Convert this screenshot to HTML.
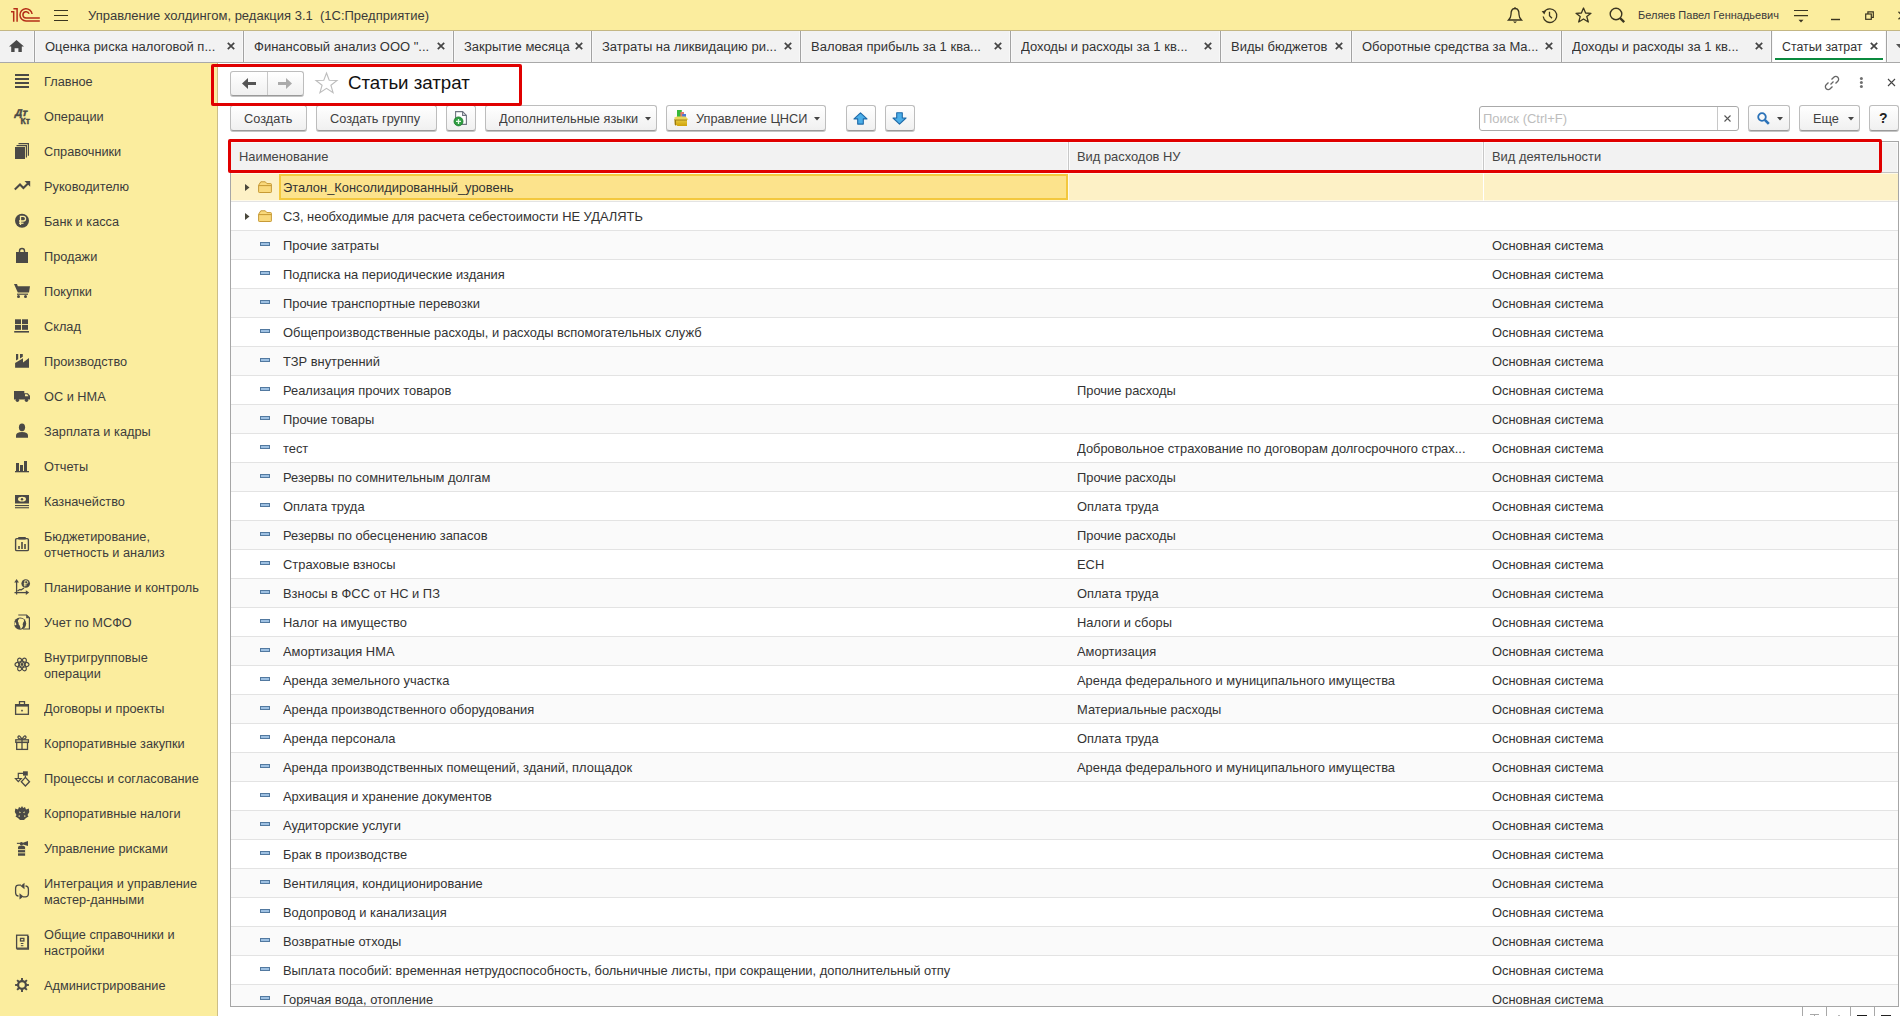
<!DOCTYPE html>
<html><head><meta charset="utf-8"><title>Статьи затрат</title><style>
*{margin:0;padding:0;box-sizing:border-box}
html,body{width:1900px;height:1016px;overflow:hidden;background:#fff}
body{position:relative;font-family:"Liberation Sans",sans-serif;color:#333333;font-size:13px}
.a{position:absolute}
.t{position:absolute;white-space:pre;line-height:1;transform:scaleY(var(--sy,1.04));transform-origin:0 0.8465em}
svg{position:absolute;overflow:visible}
.btn{position:absolute;border:1px solid #BDBDBD;border-bottom-color:#9A9A9A;border-radius:3px;background:linear-gradient(#FFFFFF,#F0F0F0);box-shadow:0 1px 0 #C4C4C4}
.tab{position:absolute;top:31px;height:31px}
.sep{position:absolute;top:31px;width:1px;height:31px;background:#A3A3A3;box-shadow:-1px 0 #F8F8F8,1px 0 #F8F8F8}
.row{position:absolute;left:231px;width:1667px;height:29px;border-bottom:1px solid #E4E4E4}
.ct{position:absolute;white-space:pre;line-height:1;font-size:12.9px;color:#333;transform:scaleY(1.04);transform-origin:0 10.9px}
.sb{position:absolute;left:44px;white-space:pre;line-height:15.38px;font-size:12.75px;color:#3C3C3C;transform:scaleY(1.04);transform-origin:0 12.11px}
</style></head><body>
<div class="a" style="left:0;top:0;width:1900px;height:31px;background:#FBED9E;border-bottom:1px solid #C4B784"></div>
<svg style="left:0;top:0" width="46" height="30" viewBox="0 0 46 30">
<g fill="none" stroke="#B52E18" stroke-width="1.5">
<path d="M11 11.8 H13.7 V21.7"/><path d="M13.4 8.8 H17.1 V21.7"/>
<path d="M32.1 14 A6.1 6.1 0 1 0 26 20.9 H39.8"/>
<path d="M29.1 13.7 A3.2 3.2 0 1 0 26 18.1 H39.8"/>
</g></svg>
<svg style="left:54px;top:9px" width="14" height="13" viewBox="0 0 14 13">
<g stroke="#3A3520" stroke-width="1.2"><path d="M0 1.5H14M0 6.5H14M0 11.5H14"/></g></svg>
<div class="t" style="left:88px;top:9px;font-size:13px;color:#3A3A3A">Управление холдингом, редакция 3.1  (1С:Предприятие)</div>
<svg style="left:1507px;top:7px" width="16" height="17" viewBox="0 0 16 17"><g fill="none" stroke="#3A3520" stroke-width="1.3">
<path d="M8 1.5 C4.5 1.5 4 4.5 4 7.5 C4 10 3 11.5 1.5 13 H14.5 C13 11.5 12 10 12 7.5 C12 4.5 11.5 1.5 8 1.5Z"/></g>
<path d="M6 14.5 H10 L8 16.2Z" fill="#3A3520"/><circle cx="8" cy="1.2" r="1" fill="#3A3520"/></svg>
<svg style="left:1541px;top:7px" width="17" height="17" viewBox="0 0 17 17"><g fill="none" stroke="#3A3520" stroke-width="1.3">
<path d="M3.2 5 A6.8 6.8 0 1 1 2.2 9.5"/><path d="M8.5 4.8 L8.5 8.8 L11 11.2"/></g>
<path d="M0.6 4.2 L5 3.4 L3.4 7.6Z" fill="#3A3520"/></svg>
<svg style="left:1575px;top:7px" width="17" height="17" viewBox="0 0 17 17"><path d="M8.5 1 L10.6 6 L16 6.3 L11.8 9.6 L13.3 15 L8.5 12 L3.7 15 L5.2 9.6 L1 6.3 L6.4 6Z" fill="none" stroke="#3A3520" stroke-width="1.3" stroke-linejoin="round"/></svg>
<svg style="left:1609px;top:7px" width="17" height="17" viewBox="0 0 17 17"><circle cx="7" cy="7" r="5.8" fill="none" stroke="#3A3520" stroke-width="1.4"/><path d="M11 11 L15.2 15.2" stroke="#3A3520" stroke-width="2.4"/></svg>
<div class="t" style="left:1638px;top:10px;font-size:11px;color:#3A3A3A;--sy:1.05">Беляев Павел Геннадьевич</div>
<svg style="left:1794px;top:9px" width="14" height="14" viewBox="0 0 14 14"><g stroke="#3A3520" stroke-width="1.1"><path d="M0 1.5H14M0 6.6H14"/></g><path d="M4.5 10.8H9.5L7 13.4Z" fill="#3A3520"/></svg>
<svg style="left:1831px;top:18px" width="9" height="3" viewBox="0 0 9 3"><path d="M0 1.5H9" stroke="#3A3520" stroke-width="1.4"/></svg>
<svg style="left:1864px;top:10px" width="11" height="11" viewBox="0 0 11 11"><g fill="none" stroke="#3A3520" stroke-width="1.2"><rect x="1.7" y="4" width="5.6" height="5.3"/><path d="M3.9 3.9V1.8H9.3V7.3H7.4"/></g></svg>
<svg style="left:1898px;top:11px" width="9" height="9" viewBox="0 0 9 9"><path d="M0.5 0.8L8 8.3M8 0.8L0.5 8.3" stroke="#3A3520" stroke-width="1.3"/></svg>
<div class="a" style="left:0;top:31px;width:1900px;height:32px;background:#F2F2F2;border-bottom:1px solid #A9A9A9"></div>
<svg style="left:9px;top:40px" width="15" height="12" viewBox="0 0 15 12"><path d="M7.5 0 L15 6.6 H12.8 V12 H9.4 V8.2 H5.6 V12 H2.2 V6.6 H0Z" fill="#4A4A4A"/></svg>
<div class="sep" style="left:34px"></div>
<div class="t" style="left:45px;top:40px;font-size:13px;color:#333">Оценка риска налоговой п...</div>
<svg style="left:227px;top:42px" width="8" height="8" viewBox="0 0 8 8"><path d="M0.8 0.8L7.2 7.2M7.2 0.8L0.8 7.2" stroke="#444" stroke-width="1.7"/></svg>
<div class="sep" style="left:243px"></div>
<div class="t" style="left:254px;top:40px;font-size:13px;color:#333">Финансовый анализ ООО &quot;...</div>
<svg style="left:437px;top:42px" width="8" height="8" viewBox="0 0 8 8"><path d="M0.8 0.8L7.2 7.2M7.2 0.8L0.8 7.2" stroke="#444" stroke-width="1.7"/></svg>
<div class="sep" style="left:453px"></div>
<div class="t" style="left:464px;top:40px;font-size:13px;color:#333">Закрытие месяца</div>
<svg style="left:575px;top:42px" width="8" height="8" viewBox="0 0 8 8"><path d="M0.8 0.8L7.2 7.2M7.2 0.8L0.8 7.2" stroke="#444" stroke-width="1.7"/></svg>
<div class="sep" style="left:591px"></div>
<div class="t" style="left:602px;top:40px;font-size:13px;color:#333">Затраты на ликвидацию ри...</div>
<svg style="left:784px;top:42px" width="8" height="8" viewBox="0 0 8 8"><path d="M0.8 0.8L7.2 7.2M7.2 0.8L0.8 7.2" stroke="#444" stroke-width="1.7"/></svg>
<div class="sep" style="left:800px"></div>
<div class="t" style="left:811px;top:40px;font-size:13px;color:#333">Валовая прибыль за 1 ква...</div>
<svg style="left:994px;top:42px" width="8" height="8" viewBox="0 0 8 8"><path d="M0.8 0.8L7.2 7.2M7.2 0.8L0.8 7.2" stroke="#444" stroke-width="1.7"/></svg>
<div class="sep" style="left:1010px"></div>
<div class="t" style="left:1021px;top:40px;font-size:13px;color:#333">Доходы и расходы за 1 кв...</div>
<svg style="left:1204px;top:42px" width="8" height="8" viewBox="0 0 8 8"><path d="M0.8 0.8L7.2 7.2M7.2 0.8L0.8 7.2" stroke="#444" stroke-width="1.7"/></svg>
<div class="sep" style="left:1220px"></div>
<div class="t" style="left:1231px;top:40px;font-size:13px;color:#333">Виды бюджетов</div>
<svg style="left:1335px;top:42px" width="8" height="8" viewBox="0 0 8 8"><path d="M0.8 0.8L7.2 7.2M7.2 0.8L0.8 7.2" stroke="#444" stroke-width="1.7"/></svg>
<div class="sep" style="left:1351px"></div>
<div class="t" style="left:1362px;top:40px;font-size:13px;color:#333">Оборотные средства за Ма...</div>
<svg style="left:1545px;top:42px" width="8" height="8" viewBox="0 0 8 8"><path d="M0.8 0.8L7.2 7.2M7.2 0.8L0.8 7.2" stroke="#444" stroke-width="1.7"/></svg>
<div class="sep" style="left:1561px"></div>
<div class="t" style="left:1572px;top:40px;font-size:13px;color:#333">Доходы и расходы за 1 кв...</div>
<svg style="left:1755px;top:42px" width="8" height="8" viewBox="0 0 8 8"><path d="M0.8 0.8L7.2 7.2M7.2 0.8L0.8 7.2" stroke="#444" stroke-width="1.7"/></svg>
<div class="a" style="left:1772px;top:31px;width:114px;height:31px;background:#fff"></div>
<div class="a" style="left:1775px;top:58px;width:108px;height:2px;background:#0A8A3E"></div>
<div class="sep" style="left:1771px"></div>
<div class="t" style="left:1782px;top:40.5px;font-size:12.35px;color:#333">Статьи затрат</div>
<svg style="left:1870px;top:42px" width="8" height="8" viewBox="0 0 8 8"><path d="M0.8 0.8L7.2 7.2M7.2 0.8L0.8 7.2" stroke="#444" stroke-width="1.7"/></svg>
<div class="sep" style="left:1886px"></div>
<svg style="left:1896px;top:44px" width="7" height="5" viewBox="0 0 7 5"><path d="M0 0H7L3.5 4Z" fill="#555"/></svg>
<div class="a" style="left:0;top:63px;width:218px;height:953px;background:#FBED9E;border-right:1px solid #CDBE86"></div>
<div class="sb" style="top:74.26px">Главное</div>
<div class="sb" style="top:109.26px">Операции</div>
<div class="sb" style="top:144.26px">Справочники</div>
<div class="sb" style="top:179.26px">Руководителю</div>
<div class="sb" style="top:214.26px">Банк и касса</div>
<div class="sb" style="top:249.26px">Продажи</div>
<div class="sb" style="top:284.26px">Покупки</div>
<div class="sb" style="top:319.26px">Склад</div>
<div class="sb" style="top:354.26px">Производство</div>
<div class="sb" style="top:389.26px">ОС и НМА</div>
<div class="sb" style="top:424.26px">Зарплата и кадры</div>
<div class="sb" style="top:459.26px">Отчеты</div>
<div class="sb" style="top:494.26px">Казначейство</div>
<div class="sb" style="top:529.26px">Бюджетирование,<br>отчетность и анализ</div>
<div class="sb" style="top:580.26px">Планирование и контроль</div>
<div class="sb" style="top:615.26px">Учет по МСФО</div>
<div class="sb" style="top:650.26px">Внутригрупповые<br>операции</div>
<div class="sb" style="top:701.26px">Договоры и проекты</div>
<div class="sb" style="top:736.26px">Корпоративные закупки</div>
<div class="sb" style="top:771.26px">Процессы и согласование</div>
<div class="sb" style="top:806.26px">Корпоративные налоги</div>
<div class="sb" style="top:841.26px">Управление рисками</div>
<div class="sb" style="top:876.26px">Интеграция и управление<br>мастер-данными</div>
<div class="sb" style="top:927.26px">Общие справочники и<br>настройки</div>
<div class="sb" style="top:978.26px">Администрирование</div>
<svg style="left:0;top:0" width="218" height="1016" viewBox="0 0 218 1016">
<g fill="#4A4946">
<rect x="15" y="74" width="14" height="2"/><rect x="15" y="78" width="14" height="2"/><rect x="15" y="82" width="14" height="2"/><rect x="15" y="86" width="14" height="2"/>
<text x="14.6" y="116.4" font-family="Liberation Sans" font-size="10" font-weight="bold" stroke="#4A4946" stroke-width="0.5" transform="translate(14.6 116.4) skewX(-14) translate(-14.6 -116.4)">Дт</text>
<text x="20.6" y="123.6" font-family="Liberation Sans" font-size="8.6" font-weight="bold" stroke="#4A4946" stroke-width="0.4">Кт</text>
<rect x="15" y="147" width="10" height="12"/>
</g>
<g fill="none" stroke="#4A4946" stroke-width="1.2">
<path d="M16.5 145.6 H26.4 V157.5"/><path d="M18.5 143.6 H28.4 V155.7"/>
<path d="M14.8 189.5 L20 184.5 L23.4 188 L28 183.5" stroke-width="2"/>
</g>
<g fill="#4A4946">
<path d="M24.5 181 H30.2 V186.8Z"/>
<circle cx="22" cy="220.7" r="7"/>
</g>
<g fill="none" stroke="#FBED9E" stroke-width="1.3">
<path d="M20.5 225 V216.3 H23.2 A2.3 2.3 0 0 1 23.2 221 H19"/><path d="M19 223.2 H23.5"/>
</g>
<g fill="#4A4946">
<path d="M16 252 H28 V263 H16Z"/>
</g>
<path d="M19.5 253.5 V251 A2.5 2.5 0 0 1 24.5 251 V253.5" fill="none" stroke="#4A4946" stroke-width="1.4"/>
<g fill="#4A4946">
<path d="M14 284 H17 L17.8 286.2 H30 L29 292.6 H17.8 Z"/>
<rect x="17" y="293.6" width="11" height="1.2"/>
<circle cx="18.5" cy="296.6" r="1.5"/><circle cx="25.5" cy="296.6" r="1.5"/>
<rect x="15" y="319.3" width="6" height="4.8"/><rect x="22" y="319.3" width="6" height="4.8"/>
<rect x="15" y="325" width="6" height="4.8"/><rect x="22" y="325" width="6" height="4.8"/>
<rect x="14.2" y="331" width="14.8" height="1.6"/>
<path d="M16 354 H18.2 V359.2 L16 360.4Z"/><path d="M20 354 H22.8 L22.8 356.8 L20 358.4Z"/>
<path d="M15.1 363 L23 358.2 V362.6 L29 358 V367.8 H15.1Z"/>
<path d="M14 391 H24.3 V393.2 H27.8 L30 395.8 V399.6 H14Z"/>
<circle cx="17.4" cy="400.3" r="1.7"/><circle cx="26.5" cy="400.3" r="1.7"/>
</g>
<path d="M25 394.3 H27.2 L28.5 396.2 H25Z" fill="#FBED9E"/>
<g fill="#4A4946">
<ellipse cx="22" cy="427.3" rx="3.1" ry="3.9"/>
<path d="M16 437.8 V435.5 Q16 432 22 432 Q28 432 28 435.5 V437.8Z"/>
<rect x="16" y="463" width="3" height="8.4"/><rect x="20" y="465" width="3" height="6.4"/><rect x="24" y="461" width="3" height="10.4"/>
<rect x="15" y="471" width="14" height="1.3"/>
<path d="M15 495 H29 V503.5 H15Z M18 499.2 A4 2.4 0 0 0 26 499.2 A4 2.4 0 0 0 18 499.2Z" fill-rule="evenodd"/>
<rect x="15" y="505" width="14" height="1.1"/><rect x="15" y="507.2" width="14" height="1.1"/>
</g>
<circle cx="22" cy="499.2" r="1.2" fill="#4A4946"/>
<g fill="none" stroke="#4A4946" stroke-width="1.4">
<rect x="15.6" y="538.6" width="12.8" height="12" rx="1.2"/>
</g>
<g fill="#4A4946">
<rect x="18" y="537" width="8" height="2.4" rx="1"/>
<rect x="18.2" y="546" width="1.6" height="3"/><rect x="21.2" y="542" width="1.6" height="7"/><rect x="24.2" y="544" width="1.6" height="5"/>
</g>
<g fill="none" stroke="#4A4946" stroke-width="1.3">
<path d="M16.6 581 V594.5"/><path d="M14.5 592.6 H27"/><path d="M17.5 591 L20 589.5 L21 590 L24 588"/>
</g>
<g fill="#4A4946">
<path d="M16.6 579 L19 582.5 H14.2Z"/><path d="M29.2 592.6 L25.8 590.3 V594.9Z"/>
<circle cx="25.7" cy="583.5" r="4.3"/>
</g>
<path d="M24.8 586.5 V580.8 H26.4 A1.4 1.4 0 0 1 26.4 583.6 H23.8 M23.8 585 H26.6" fill="none" stroke="#FBED9E" stroke-width="0.9"/>
<path d="M18.3 615 H26.6 L29.4 617.8 V629 H23" fill="none" stroke="#4A4946" stroke-width="1.2"/><path d="M26.2 615 V618.2 H29.4Z" fill="#4A4946"/>
<circle cx="20.1" cy="623.6" r="6.1" fill="#4A4946"/>
<path d="M19.2 618.6 Q21.8 618 23.8 619.6 Q24.6 621.4 23.2 622.6 Q22.2 624.2 23 626 Q22 628.6 20.6 629 Q20.4 626.8 19.6 625.6 Q18.2 624.6 18.6 622.8 Q17.6 621.8 18 620.4Z" fill="#FBED9E"/>
<path d="M14.6 621.6 Q16.2 622.8 16.4 624.8 Q15.6 625.6 14.4 625Z" fill="#FBED9E"/>
<g fill="none" stroke="#4A4946" stroke-width="1.2">
<ellipse cx="22" cy="664.5" rx="7" ry="2.6"/>
<ellipse cx="22" cy="664.5" rx="7" ry="2.6" transform="rotate(60 22 664.5)"/>
<ellipse cx="22" cy="664.5" rx="7" ry="2.6" transform="rotate(-60 22 664.5)"/>
</g>
<circle cx="22" cy="664.5" r="1.4" fill="#4A4946"/>
<g fill="none" stroke="#4A4946" stroke-width="1.3">
<rect x="15.6" y="704.7" width="12.8" height="9.6"/>
<path d="M19.5 704.5 V701.7 H24.5 V704.5"/>
</g>
<rect x="15" y="704" width="14" height="2.6" fill="#4A4946"/>
<rect x="21.2" y="709.8" width="1.6" height="1.6" fill="#4A4946"/>
<g fill="none" stroke="#4A4946" stroke-width="1.3">
<rect x="15.8" y="739.8" width="12.6" height="2.6"/>
<rect x="16.7" y="742.4" width="10.8" height="7"/>
<path d="M22 739.5 V749.5"/>
<path d="M22 739.2 Q19 733.8 18 737 Q17.5 739 22 739.2 Q26.5 739 26 737 Q25 733.8 22 739.2"/>
</g>
<rect x="23" y="771.3" width="4.8" height="4.3" fill="#4A4946"/>
<g fill="none" stroke="#4A4946" stroke-width="1.2">
<path d="M23 773.4 H18.3 V778"/><path d="M25.4 775.5 V777.5"/>
<path d="M25.4 777.4 L29.5 781.7 L25.4 786 L21.3 781.7Z" stroke-width="1.3"/>
<path d="M15.5 778.5 H21.2 L18.3 781.6Z"/>
</g>
<g fill="#4A4946">
<path d="M22 806 L23.2 808 L25 807 L26 809.5 L28.8 808.5 L29.3 812 L27.5 815 L28.5 816.5 L26 818 L24 820 H20 L18 818 L15.5 816.5 L16.5 815 L14.8 812 L15.3 808.5 L18 809.5 L19 807 L20.8 808Z"/>
</g>
<g fill="#FBED9E"><path d="M19.2 811.5 L21 812.2 L19.6 813.2Z"/><path d="M24.8 811.5 L23 812.2 L24.4 813.2Z"/><path d="M18 816 L20 815.2 L19.6 817Z"/><path d="M26 816 L24 815.2 L24.4 817Z"/></g>
<g fill="#4A4946">
<path d="M18 847.5 Q18 845.5 21.5 845.5 Q25.1 845.5 25.1 847.5 V855.8 H18Z"/>
<circle cx="21.5" cy="843.8" r="1.7"/>
<path d="M23 842.8 L28 841 V846 L23 844.5Z"/>
<rect x="16.9" y="842.8" width="4.5" height="1.1"/>
</g>
<g fill="#FBED9E"><rect x="18" y="849.2" width="7.1" height="0.9"/><rect x="18" y="852.4" width="7.1" height="0.9"/></g>
<g fill="none" stroke="#4A4946" stroke-width="1.3">
<path d="M21 885.2 H18.5 Q15.8 885.2 15.6 888 V893 Q15.8 896 18.5 896"/>
<path d="M23 896.8 H25.5 Q28.2 896.8 28.4 894 V889 Q28.2 886 25.5 886"/>
</g>
<g fill="#4A4946"><path d="M24.5 882.8 V889.2 L20.5 886Z"/><path d="M19.5 893.2 V899.6 L23.5 896.4Z"/></g>
<g fill="none" stroke="#4A4946" stroke-width="1.3">
<rect x="16.6" y="935.2" width="11.2" height="13"/>
<path d="M16.6 949.2 H28.4 V936"/>
<rect x="20.5" y="938.4" width="3.4" height="2.6"/>
</g>
<rect x="20.8" y="943" width="2.6" height="1" fill="#4A4946"/><rect x="20.8" y="945.2" width="2.6" height="1" fill="#4A4946"/>
<g transform="translate(22 985)"><circle r="3.9" fill="none" stroke="#4A4946" stroke-width="2.2"/><g stroke="#4A4946" stroke-width="1.9"><path d="M4.20 0.00 L6.90 0.00"/><path d="M2.97 2.97 L4.88 4.88"/><path d="M0.00 4.20 L0.00 6.90"/><path d="M-2.97 2.97 L-4.88 4.88"/><path d="M-4.20 0.00 L-6.90 0.00"/><path d="M-2.97 -2.97 L-4.88 -4.88"/><path d="M-0.00 -4.20 L-0.00 -6.90"/><path d="M2.97 -2.97 L4.88 -4.88"/></g></g>
</svg>
<div class="btn" style="left:230px;top:71px;width:74px;height:25px"></div>
<div class="a" style="left:267px;top:72px;width:1px;height:23px;background:#C8C8C8"></div>
<svg style="left:242px;top:78px" width="14" height="11" viewBox="0 0 14 11"><path d="M0 5.5 L6 0 V4 H14 V7 H6 V11Z" fill="#555"/></svg>
<svg style="left:278px;top:78px" width="14" height="11" viewBox="0 0 14 11"><path d="M14 5.5 L8 0 V4 H0 V7 H8 V11Z" fill="#ABABAB"/></svg>
<svg style="left:315px;top:72px" width="23" height="22" viewBox="0 0 23 22"><path d="M11.5 1 L14.2 8.2 L22 8.4 L15.9 13.2 L18.1 20.8 L11.5 16.4 L4.9 20.8 L7.1 13.2 L1 8.4 L8.8 8.2Z" fill="none" stroke="#BDBDBD" stroke-width="1.1" stroke-linejoin="miter"/></svg>
<div class="t" style="left:348px;top:74px;font-size:18.7px;color:#111;--sy:1">Статьи затрат</div>
<svg style="left:1824px;top:75px" width="16" height="16" viewBox="0 0 16 16"><g fill="none" stroke="#666" stroke-width="1.3"><path d="M6.5 9.5 L9.5 6.5"/><path d="M7.5 4.5 L9.8 2.2 A2.6 2.6 0 0 1 13.8 6.2 L11.5 8.5"/><path d="M8.5 11.5 L6.2 13.8 A2.6 2.6 0 0 1 2.2 9.8 L4.5 7.5"/></g></svg>
<svg style="left:1859px;top:77px" width="5" height="12" viewBox="0 0 5 12"><g fill="#707070"><circle cx="2.4" cy="1.6" r="1.5"/><circle cx="2.4" cy="5.5" r="1.5"/><circle cx="2.4" cy="9.5" r="1.5"/></g></svg>
<svg style="left:1888px;top:79px" width="7" height="7" viewBox="0 0 7 7"><path d="M0 0L7 7M7 0L0 7" stroke="#444" stroke-width="1.1"/></svg>
<div class="btn" style="left:230px;top:105px;width:77px;height:26px"></div>
<div class="t" style="left:244px;top:112.5px;font-size:12.75px;color:#404040">Создать</div>
<div class="btn" style="left:316px;top:105px;width:121px;height:26px"></div>
<div class="t" style="left:330px;top:112.5px;font-size:12.75px;color:#404040">Создать группу</div>
<div class="btn" style="left:446px;top:105px;width:30px;height:26px"></div>
<svg style="left:452px;top:110px" width="18" height="18" viewBox="0 0 18 18"><path d="M3.6 1.6 H10.6 L14.4 5.4 V14.4 H3.6Z" fill="#fff" stroke="#6E7480" stroke-width="1.1"/><path d="M10.6 1.6 V5.4 H14.4" fill="none" stroke="#6E7480" stroke-width="1.1"/>
<circle cx="6.5" cy="11.4" r="4.5" fill="#2E9E40" stroke="#1B7A2C" stroke-width="0.8"/><path d="M6.5 8.9V13.9M4 11.4H9" stroke="#E8F8E8" stroke-width="1.3"/></svg>
<div class="btn" style="left:485px;top:105px;width:172px;height:26px"></div>
<div class="t" style="left:499px;top:112.5px;font-size:12.75px;color:#404040">Дополнительные языки</div>
<svg style="left:645px;top:117px" width="6" height="4" viewBox="0 0 6 4"><path d="M0 0H6L3 3.5Z" fill="#444"/></svg>
<div class="btn" style="left:666px;top:105px;width:160px;height:26px"></div>
<div class="t" style="left:696px;top:112.5px;font-size:12.75px;color:#404040">Управление ЦНСИ</div>
<svg style="left:814px;top:117px" width="6" height="4" viewBox="0 0 6 4"><path d="M0 0H6L3 3.5Z" fill="#444"/></svg>
<svg style="left:673px;top:109px" width="17" height="18" viewBox="0 0 17 18">
<defs><linearGradient id="bx" x1="0" y1="0" x2="0" y2="1"><stop offset="0" stop-color="#EBD24A"/><stop offset="1" stop-color="#CFA20A"/></linearGradient></defs>
<rect x="4" y="1" width="4.8" height="7" fill="#36B83A"/><rect x="7.4" y="3" width="3.6" height="5.5" fill="#E07A6A"/><rect x="9.2" y="5" width="3.8" height="3.5" fill="#4A78D8"/>
<path d="M1.2 8.4 L4 7.4 H12.6 L15.4 10.4 L13.8 11 H3Z" fill="#E9D75A"/>
<path d="M3 11 H14 V17 H4.5 L1.8 15 L1.5 9.5Z" fill="url(#bx)"/>
<path d="M1.5 9.5 L3 11 V17 L1.8 15.5Z" fill="#9A7A10"/>
<path d="M3 11 H14" stroke="#8A6A08" stroke-width="0.8"/>
</svg>
<div class="btn" style="left:846px;top:105px;width:30px;height:26px"></div>
<div class="btn" style="left:885px;top:105px;width:30px;height:26px"></div>
<svg style="left:853px;top:111.5px" width="15" height="13" viewBox="0 0 15 13"><path d="M7.5 0.8 L14 6.9 H10.3 V12.1 H4.7 V6.9 H1Z" fill="#4BAEE8" stroke="#1F6AA8" stroke-width="1.1" stroke-linejoin="round"/></svg>
<svg style="left:892px;top:111.5px" width="15" height="13" viewBox="0 0 15 13"><path d="M7.5 12.1 L14 6 H10.3 V0.8 H4.7 V6 H1Z" fill="#4BAEE8" stroke="#1F6AA8" stroke-width="1.1" stroke-linejoin="round"/></svg>
<div class="a" style="left:1479px;top:106px;width:260px;height:25px;border:1px solid #AAAAAA;border-radius:3px;background:#fff"></div>
<div class="a" style="left:1717px;top:107px;width:1px;height:23px;background:#C8C8C8"></div>
<div class="t" style="left:1483px;top:112px;font-size:13px;color:#BDBDBD">Поиск (Ctrl+F)</div>
<svg style="left:1724px;top:115px" width="7" height="7" viewBox="0 0 7 7"><path d="M0.5 0.5L6.5 6.5M6.5 0.5L0.5 6.5" stroke="#555" stroke-width="1.1"/></svg>
<div class="btn" style="left:1748px;top:105px;width:42px;height:26px"></div>
<svg style="left:1777px;top:117px" width="6" height="4" viewBox="0 0 6 4"><path d="M0 0H6L3 3.5Z" fill="#444"/></svg>
<svg style="left:1757px;top:112px" width="13" height="13" viewBox="0 0 13 13"><circle cx="5" cy="5" r="3.8" fill="none" stroke="#2B72B8" stroke-width="1.8"/><path d="M7.8 7.8 L11.8 11.8" stroke="#2B72B8" stroke-width="2.6"/></svg>
<div class="btn" style="left:1799px;top:105px;width:61px;height:26px"></div>
<div class="t" style="left:1813px;top:112.5px;font-size:12.75px;color:#404040">Еще</div>
<svg style="left:1848px;top:117px" width="6" height="4" viewBox="0 0 6 4"><path d="M0 0H6L3 3.5Z" fill="#444"/></svg>
<div class="btn" style="left:1869px;top:105px;width:30px;height:26px"></div>
<div class="t" style="left:1879px;top:111px;font-size:14px;font-weight:bold;color:#222">?</div>
<div class="a" style="left:230px;top:141px;width:1669px;height:866px;border:1px solid #A6A6A6;border-bottom-width:2px"></div>
<div class="a" style="left:231px;top:142px;width:1667px;height:31px;background:#F2F2F2;border-bottom:1px solid #C4C4C4;box-shadow:inset 0 1px #FAFAFA,inset -1px 0 #FAFAFA"></div>
<div class="a" style="left:1068px;top:142px;width:1px;height:30px;background:#C8C8C8;box-shadow:-1px 0 #FCFCFC,1px 0 #FCFCFC"></div>
<div class="a" style="left:1483px;top:142px;width:1px;height:30px;background:#C8C8C8;box-shadow:-1px 0 #FCFCFC,1px 0 #FCFCFC"></div>
<div class="ct" style="left:239px;top:151px;color:#444">Наименование</div>
<div class="ct" style="left:1077px;top:151px;color:#444">Вид расходов НУ</div>
<div class="ct" style="left:1492px;top:151px;color:#444">Вид деятельности</div>
<div class="a" style="left:231px;top:173px;width:1667px;height:833px;overflow:hidden">
<div class="a" style="left:0;top:0px;width:1667px;height:29px;background:#FDF1C6;border-bottom:1px solid #E3E3E3;box-shadow:inset 0 1px #FFFAE8,inset 0 -1px #FFFAE8"></div>
<div class="a" style="left:48px;top:1px;width:789px;height:26px;background:#FCE38C;border:2px solid #F3C83E"></div>
<div class="a" style="left:1252px;top:0px;width:1px;height:28px;background:#fff"></div>
<div class="a" style="left:837px;top:0px;width:1px;height:28px;background:#FFFBEA"></div>
<svg style="left:14px;top:11px" width="5" height="7" viewBox="0 0 5 7"><path d="M0 0 L4.5 3.5 L0 7Z" fill="#4A473C"/></svg>
<svg style="left:27px;top:8px" width="14" height="12" viewBox="0 0 14 12"><path d="M0.6 4.2 L2.8 0.8 H7.3 L8.9 2.6 H12.7 Q13.4 2.6 13.4 3.3 V10.9 Q13.4 11.5 12.7 11.5 H1.3 Q0.6 11.5 0.6 10.9Z" fill="#F9D97C" stroke="#C4962F" stroke-width="0.95" stroke-linejoin="round"/><path d="M0.7 4.6 H13.3" stroke="#C4962F" stroke-width="0.95"/></svg>
<div class="ct" style="left:52px;top:9px">Эталон_Консолидированный_уровень</div>
<div class="a" style="left:0;top:29px;width:1667px;height:29px;background:#FFFFFF;border-bottom:1px solid #E3E3E3"></div>
<svg style="left:14px;top:40px" width="5" height="7" viewBox="0 0 5 7"><path d="M0 0 L4.5 3.5 L0 7Z" fill="#4A473C"/></svg>
<svg style="left:27px;top:37px" width="14" height="12" viewBox="0 0 14 12"><path d="M0.6 4.2 L2.8 0.8 H7.3 L8.9 2.6 H12.7 Q13.4 2.6 13.4 3.3 V10.9 Q13.4 11.5 12.7 11.5 H1.3 Q0.6 11.5 0.6 10.9Z" fill="#F9D97C" stroke="#C4962F" stroke-width="0.95" stroke-linejoin="round"/><path d="M0.7 4.6 H13.3" stroke="#C4962F" stroke-width="0.95"/></svg>
<div class="ct" style="left:52px;top:38px">СЗ, необходимые для расчета себестоимости НЕ УДАЛЯТЬ</div>
<div class="a" style="left:0;top:58px;width:1667px;height:29px;background:#FAFAFA;border-bottom:1px solid #E3E3E3"></div>
<div class="a" style="left:29px;top:69px;width:10px;height:4px;background:#9DC0E2;border:1px solid #5279A0"></div>
<div class="ct" style="left:52px;top:67px">Прочие затраты</div>
<div class="ct" style="left:1261px;top:67px">Основная система</div>
<div class="a" style="left:0;top:87px;width:1667px;height:29px;background:#FFFFFF;border-bottom:1px solid #E3E3E3"></div>
<div class="a" style="left:29px;top:98px;width:10px;height:4px;background:#9DC0E2;border:1px solid #5279A0"></div>
<div class="ct" style="left:52px;top:96px">Подписка на периодические издания</div>
<div class="ct" style="left:1261px;top:96px">Основная система</div>
<div class="a" style="left:0;top:116px;width:1667px;height:29px;background:#FAFAFA;border-bottom:1px solid #E3E3E3"></div>
<div class="a" style="left:29px;top:127px;width:10px;height:4px;background:#9DC0E2;border:1px solid #5279A0"></div>
<div class="ct" style="left:52px;top:125px">Прочие транспортные перевозки</div>
<div class="ct" style="left:1261px;top:125px">Основная система</div>
<div class="a" style="left:0;top:145px;width:1667px;height:29px;background:#FFFFFF;border-bottom:1px solid #E3E3E3"></div>
<div class="a" style="left:29px;top:156px;width:10px;height:4px;background:#9DC0E2;border:1px solid #5279A0"></div>
<div class="ct" style="left:52px;top:154px">Общепроизводственные расходы, и расходы вспомогательных служб</div>
<div class="ct" style="left:1261px;top:154px">Основная система</div>
<div class="a" style="left:0;top:174px;width:1667px;height:29px;background:#FAFAFA;border-bottom:1px solid #E3E3E3"></div>
<div class="a" style="left:29px;top:185px;width:10px;height:4px;background:#9DC0E2;border:1px solid #5279A0"></div>
<div class="ct" style="left:52px;top:183px">ТЗР внутренний</div>
<div class="ct" style="left:1261px;top:183px">Основная система</div>
<div class="a" style="left:0;top:203px;width:1667px;height:29px;background:#FFFFFF;border-bottom:1px solid #E3E3E3"></div>
<div class="a" style="left:29px;top:214px;width:10px;height:4px;background:#9DC0E2;border:1px solid #5279A0"></div>
<div class="ct" style="left:52px;top:212px">Реализация прочих товаров</div>
<div class="ct" style="left:846px;top:212px">Прочие расходы</div>
<div class="ct" style="left:1261px;top:212px">Основная система</div>
<div class="a" style="left:0;top:232px;width:1667px;height:29px;background:#FAFAFA;border-bottom:1px solid #E3E3E3"></div>
<div class="a" style="left:29px;top:243px;width:10px;height:4px;background:#9DC0E2;border:1px solid #5279A0"></div>
<div class="ct" style="left:52px;top:241px">Прочие товары</div>
<div class="ct" style="left:1261px;top:241px">Основная система</div>
<div class="a" style="left:0;top:261px;width:1667px;height:29px;background:#FFFFFF;border-bottom:1px solid #E3E3E3"></div>
<div class="a" style="left:29px;top:272px;width:10px;height:4px;background:#9DC0E2;border:1px solid #5279A0"></div>
<div class="ct" style="left:52px;top:270px">тест</div>
<div class="ct" style="left:846px;top:270px">Добровольное страхование по договорам долгосрочного страх...</div>
<div class="ct" style="left:1261px;top:270px">Основная система</div>
<div class="a" style="left:0;top:290px;width:1667px;height:29px;background:#FAFAFA;border-bottom:1px solid #E3E3E3"></div>
<div class="a" style="left:29px;top:301px;width:10px;height:4px;background:#9DC0E2;border:1px solid #5279A0"></div>
<div class="ct" style="left:52px;top:299px">Резервы по сомнительным долгам</div>
<div class="ct" style="left:846px;top:299px">Прочие расходы</div>
<div class="ct" style="left:1261px;top:299px">Основная система</div>
<div class="a" style="left:0;top:319px;width:1667px;height:29px;background:#FFFFFF;border-bottom:1px solid #E3E3E3"></div>
<div class="a" style="left:29px;top:330px;width:10px;height:4px;background:#9DC0E2;border:1px solid #5279A0"></div>
<div class="ct" style="left:52px;top:328px">Оплата труда</div>
<div class="ct" style="left:846px;top:328px">Оплата труда</div>
<div class="ct" style="left:1261px;top:328px">Основная система</div>
<div class="a" style="left:0;top:348px;width:1667px;height:29px;background:#FAFAFA;border-bottom:1px solid #E3E3E3"></div>
<div class="a" style="left:29px;top:359px;width:10px;height:4px;background:#9DC0E2;border:1px solid #5279A0"></div>
<div class="ct" style="left:52px;top:357px">Резервы по обесценению запасов</div>
<div class="ct" style="left:846px;top:357px">Прочие расходы</div>
<div class="ct" style="left:1261px;top:357px">Основная система</div>
<div class="a" style="left:0;top:377px;width:1667px;height:29px;background:#FFFFFF;border-bottom:1px solid #E3E3E3"></div>
<div class="a" style="left:29px;top:388px;width:10px;height:4px;background:#9DC0E2;border:1px solid #5279A0"></div>
<div class="ct" style="left:52px;top:386px">Страховые взносы</div>
<div class="ct" style="left:846px;top:386px">ЕСН</div>
<div class="ct" style="left:1261px;top:386px">Основная система</div>
<div class="a" style="left:0;top:406px;width:1667px;height:29px;background:#FAFAFA;border-bottom:1px solid #E3E3E3"></div>
<div class="a" style="left:29px;top:417px;width:10px;height:4px;background:#9DC0E2;border:1px solid #5279A0"></div>
<div class="ct" style="left:52px;top:415px">Взносы в ФСС от НС и ПЗ</div>
<div class="ct" style="left:846px;top:415px">Оплата труда</div>
<div class="ct" style="left:1261px;top:415px">Основная система</div>
<div class="a" style="left:0;top:435px;width:1667px;height:29px;background:#FFFFFF;border-bottom:1px solid #E3E3E3"></div>
<div class="a" style="left:29px;top:446px;width:10px;height:4px;background:#9DC0E2;border:1px solid #5279A0"></div>
<div class="ct" style="left:52px;top:444px">Налог на имущество</div>
<div class="ct" style="left:846px;top:444px">Налоги и сборы</div>
<div class="ct" style="left:1261px;top:444px">Основная система</div>
<div class="a" style="left:0;top:464px;width:1667px;height:29px;background:#FAFAFA;border-bottom:1px solid #E3E3E3"></div>
<div class="a" style="left:29px;top:475px;width:10px;height:4px;background:#9DC0E2;border:1px solid #5279A0"></div>
<div class="ct" style="left:52px;top:473px">Амортизация НМА</div>
<div class="ct" style="left:846px;top:473px">Амортизация</div>
<div class="ct" style="left:1261px;top:473px">Основная система</div>
<div class="a" style="left:0;top:493px;width:1667px;height:29px;background:#FFFFFF;border-bottom:1px solid #E3E3E3"></div>
<div class="a" style="left:29px;top:504px;width:10px;height:4px;background:#9DC0E2;border:1px solid #5279A0"></div>
<div class="ct" style="left:52px;top:502px">Аренда земельного участка</div>
<div class="ct" style="left:846px;top:502px">Аренда федерального и муниципального имущества</div>
<div class="ct" style="left:1261px;top:502px">Основная система</div>
<div class="a" style="left:0;top:522px;width:1667px;height:29px;background:#FAFAFA;border-bottom:1px solid #E3E3E3"></div>
<div class="a" style="left:29px;top:533px;width:10px;height:4px;background:#9DC0E2;border:1px solid #5279A0"></div>
<div class="ct" style="left:52px;top:531px">Аренда производственного оборудования</div>
<div class="ct" style="left:846px;top:531px">Материальные расходы</div>
<div class="ct" style="left:1261px;top:531px">Основная система</div>
<div class="a" style="left:0;top:551px;width:1667px;height:29px;background:#FFFFFF;border-bottom:1px solid #E3E3E3"></div>
<div class="a" style="left:29px;top:562px;width:10px;height:4px;background:#9DC0E2;border:1px solid #5279A0"></div>
<div class="ct" style="left:52px;top:560px">Аренда персонала</div>
<div class="ct" style="left:846px;top:560px">Оплата труда</div>
<div class="ct" style="left:1261px;top:560px">Основная система</div>
<div class="a" style="left:0;top:580px;width:1667px;height:29px;background:#FAFAFA;border-bottom:1px solid #E3E3E3"></div>
<div class="a" style="left:29px;top:591px;width:10px;height:4px;background:#9DC0E2;border:1px solid #5279A0"></div>
<div class="ct" style="left:52px;top:589px">Аренда производственных помещений, зданий, площадок</div>
<div class="ct" style="left:846px;top:589px">Аренда федерального и муниципального имущества</div>
<div class="ct" style="left:1261px;top:589px">Основная система</div>
<div class="a" style="left:0;top:609px;width:1667px;height:29px;background:#FFFFFF;border-bottom:1px solid #E3E3E3"></div>
<div class="a" style="left:29px;top:620px;width:10px;height:4px;background:#9DC0E2;border:1px solid #5279A0"></div>
<div class="ct" style="left:52px;top:618px">Архивация и хранение документов</div>
<div class="ct" style="left:1261px;top:618px">Основная система</div>
<div class="a" style="left:0;top:638px;width:1667px;height:29px;background:#FAFAFA;border-bottom:1px solid #E3E3E3"></div>
<div class="a" style="left:29px;top:649px;width:10px;height:4px;background:#9DC0E2;border:1px solid #5279A0"></div>
<div class="ct" style="left:52px;top:647px">Аудиторские услуги</div>
<div class="ct" style="left:1261px;top:647px">Основная система</div>
<div class="a" style="left:0;top:667px;width:1667px;height:29px;background:#FFFFFF;border-bottom:1px solid #E3E3E3"></div>
<div class="a" style="left:29px;top:678px;width:10px;height:4px;background:#9DC0E2;border:1px solid #5279A0"></div>
<div class="ct" style="left:52px;top:676px">Брак в производстве</div>
<div class="ct" style="left:1261px;top:676px">Основная система</div>
<div class="a" style="left:0;top:696px;width:1667px;height:29px;background:#FAFAFA;border-bottom:1px solid #E3E3E3"></div>
<div class="a" style="left:29px;top:707px;width:10px;height:4px;background:#9DC0E2;border:1px solid #5279A0"></div>
<div class="ct" style="left:52px;top:705px">Вентиляция, кондиционирование</div>
<div class="ct" style="left:1261px;top:705px">Основная система</div>
<div class="a" style="left:0;top:725px;width:1667px;height:29px;background:#FFFFFF;border-bottom:1px solid #E3E3E3"></div>
<div class="a" style="left:29px;top:736px;width:10px;height:4px;background:#9DC0E2;border:1px solid #5279A0"></div>
<div class="ct" style="left:52px;top:734px">Водопровод и канализация</div>
<div class="ct" style="left:1261px;top:734px">Основная система</div>
<div class="a" style="left:0;top:754px;width:1667px;height:29px;background:#FAFAFA;border-bottom:1px solid #E3E3E3"></div>
<div class="a" style="left:29px;top:765px;width:10px;height:4px;background:#9DC0E2;border:1px solid #5279A0"></div>
<div class="ct" style="left:52px;top:763px">Возвратные отходы</div>
<div class="ct" style="left:1261px;top:763px">Основная система</div>
<div class="a" style="left:0;top:783px;width:1667px;height:29px;background:#FFFFFF;border-bottom:1px solid #E3E3E3"></div>
<div class="a" style="left:29px;top:794px;width:10px;height:4px;background:#9DC0E2;border:1px solid #5279A0"></div>
<div class="ct" style="left:52px;top:792px">Выплата пособий: временная нетрудоспособность, больничные листы, при сокращении, дополнительный отпу</div>
<div class="ct" style="left:1261px;top:792px">Основная система</div>
<div class="a" style="left:0;top:812px;width:1667px;height:29px;background:#FAFAFA;border-bottom:1px solid #E3E3E3"></div>
<div class="a" style="left:29px;top:823px;width:10px;height:4px;background:#9DC0E2;border:1px solid #5279A0"></div>
<div class="ct" style="left:52px;top:821px">Горячая вода, отопление</div>
<div class="ct" style="left:1261px;top:821px">Основная система</div>
</div>
<div class="a" style="left:1802px;top:1007px;width:1px;height:9px;background:#A8A8A8"></div>
<div class="a" style="left:1826px;top:1007px;width:1px;height:9px;background:#A8A8A8"></div>
<div class="a" style="left:1850px;top:1007px;width:1px;height:9px;background:#A8A8A8"></div>
<div class="a" style="left:1874px;top:1007px;width:1px;height:9px;background:#A8A8A8"></div>
<div class="a" style="left:1810px;top:1014px;width:9px;height:1px;background:#A8A8A8"></div>
<div class="a" style="left:1814px;top:1015px;width:1px;height:1px;background:#A8A8A8"></div>
<div class="a" style="left:1838px;top:1015px;width:2px;height:1px;background:#B8B8B8"></div>
<div class="a" style="left:1857px;top:1015px;width:10px;height:1px;background:#1A1A1A"></div>
<div class="a" style="left:1881px;top:1015px;width:10px;height:1px;background:#222"></div>
<div class="a" style="left:211px;top:64px;width:311px;height:42px;border:3px solid #E00000;border-radius:2px"></div>
<div class="a" style="left:228px;top:139px;width:1654px;height:34px;border:3px solid #E00000;border-radius:2px"></div>
</body></html>
